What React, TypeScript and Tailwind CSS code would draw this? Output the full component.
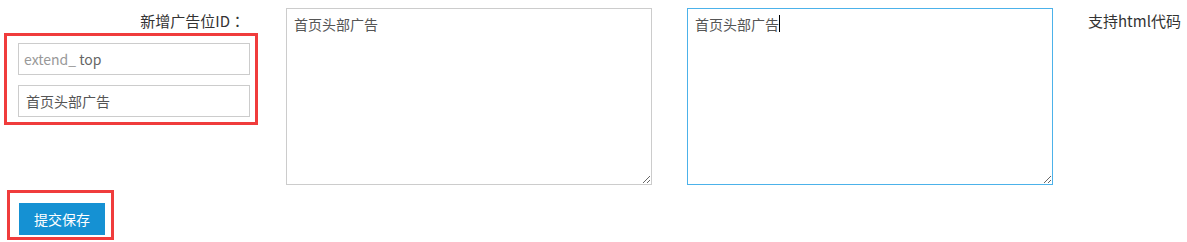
import React from "react";

const font = { fontFamily: "'Noto Sans CJK SC', 'Noto Sans', sans-serif" };

export default function App() {
  return (
    <div className="w-[1187px] h-[242px] bg-white pt-[8px] text-[#333]" style={font}>
      <div className="flex items-start">
        <div className="ml-[4px] w-[254px] flex flex-col">
          <div className="h-[25px] pt-[3px] leading-[20px] text-[15px] text-right pr-[13px]">
            新增广告位ID
            <span style={{ fontFamily: "'Noto Sans CJK TC', sans-serif" }}>：</span>
          </div>
          <div className="border-[3px] border-[#f03c3c] h-[92px] pl-[11px] pr-[5px] pt-[7px] flex flex-col gap-[10px]">
            <div className="h-[32px] border border-[#ccc] flex items-center pl-[5px] text-[14px]">
              <span className="text-[#999]">extend_&nbsp;</span>
              <span className="text-[#666]">top</span>
            </div>
            <div className="h-[32px] border border-[#ccc] flex items-center pl-[7px] text-[14px] text-[#555]">首页头部广告</div>
          </div>
        </div>
        <textarea
          className="ml-[28px] w-[366px] h-[177px] border border-[#ccc] outline-none px-[7px] pt-[5px] text-[14px] leading-[20px] text-[#555]"
          style={font}
          defaultValue="首页头部广告"
        />
        <div className="relative ml-[35px]">
          <textarea
            className="block w-[366px] h-[177px] border border-[#4cb2ea] outline-none px-[7px] pt-[5px] text-[14px] leading-[20px] text-[#555]"
            style={font}
            defaultValue="首页头部广告"
          />
          <div className="absolute left-[92px] top-[7px] w-[1px] h-[17px] bg-black" />
        </div>
        <div className="ml-[35px] pt-[3px] leading-[20px] text-[15px]">支持html代码</div>
      </div>
      <div className="mt-[5px] ml-[7px] w-[107px] h-[50px] border-[3px] border-[#f03c3c] pl-[9px] pt-[10px]">
        <button className="w-[86px] h-[32px] bg-[#1591d3] text-white text-[14px] flex items-center justify-center" style={font}>
          提交保存
        </button>
      </div>
    </div>
  );
}
